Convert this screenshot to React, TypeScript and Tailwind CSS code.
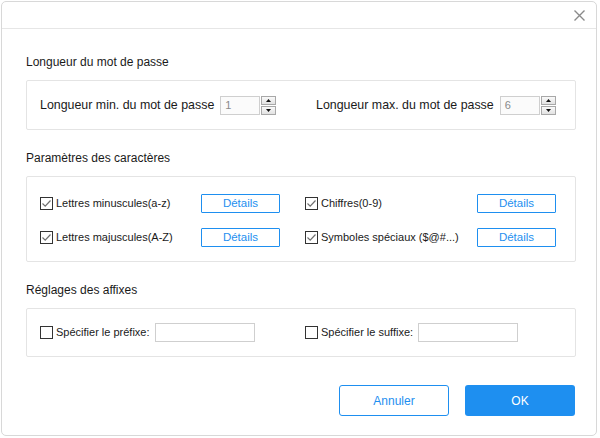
import React from "react";

const font = { fontFamily: '"Liberation Sans", Arial, sans-serif' };

const Checkbox = ({ checked }: { checked: boolean }) => (
  <span className="w-[13px] h-[13px] border border-[#333] bg-white flex items-center justify-center shrink-0">
    {checked && (
      <svg width="11" height="11" viewBox="0 0 11 11">
        <path d="M1.5 5.5 L4.2 8.2 L9.5 2.5" fill="none" stroke="#707070" strokeWidth="1.2" />
      </svg>
    )}
  </span>
);

const Spinner = ({ value }: { value: string }) => (
  <div className="flex items-center">
    <div className="w-[40px] h-[19px] border border-[#cfcfcf] bg-[#fbfbfb] text-[#8a8a8a] text-[11px] leading-[17px] pl-[4px]">
      {value}
    </div>
    <div className="flex flex-col gap-[1px] ml-px">
      <div className="w-[15px] h-[9px] border border-[#a8a8a8] bg-gradient-to-b from-[#fafafa] to-[#e2e2e2] flex items-center justify-center">
        <svg width="5" height="3" viewBox="0 0 5 3"><path d="M2.5 0 L5 3 L0 3 Z" fill="#111" /></svg>
      </div>
      <div className="w-[15px] h-[9px] border border-[#a8a8a8] bg-gradient-to-b from-[#fafafa] to-[#e2e2e2] flex items-center justify-center">
        <svg width="5" height="3" viewBox="0 0 5 3"><path d="M0 0 L5 0 L2.5 3 Z" fill="#111" /></svg>
      </div>
    </div>
  </div>
);

const DetailsButton = () => (
  <button className="w-[79px] h-[19px] border border-[#1e8ff0] text-[#1e8ff0] text-[11.5px] leading-[17px] bg-white rounded-[1px]">
    Détails
  </button>
);

const CheckLabel = ({ checked, label }: { checked: boolean; label: string }) => (
  <label className="flex items-center gap-[3px] text-[11px] text-[#1a1a1a] whitespace-nowrap">
    <Checkbox checked={checked} />
    <span>{label}</span>
  </label>
);

const Section = ({ title, children }: { title: string; children: React.ReactNode }) => (
  <div>
    <div className="h-[16px] leading-[16px] text-[12px] text-[#1a1a1a]">{title}</div>
    <div className="mt-[10px] border border-[#e4e4e4] rounded-[2px]">{children}</div>
  </div>
);

export default function App() {
  return (
    <div className="w-[600px] h-[438px] bg-white p-px" style={font}>
      <div className="w-[596px] h-[435px] border border-[#d8d8d8] rounded-[5px] flex flex-col">
        <div className="h-[27px] border-b border-[#e6e6e6] flex items-center justify-end pr-[11px]">
          <svg width="11" height="11" viewBox="0 0 11 11">
            <path d="M0.5 0.5 L10.5 10.5 M10.5 0.5 L0.5 10.5" stroke="#8a8a8a" strokeWidth="1.4" />
          </svg>
        </div>

        <div className="flex flex-col gap-[20px] pl-[24px] pr-[20px] pt-[25px]">
          <Section title="Longueur du mot de passe">
            <div className="h-[48px] flex items-center pl-[13px] text-[12.4px] text-[#1a1a1a] whitespace-nowrap">
              <div className="w-[276px] flex items-center gap-[6px]">
                <span>Longueur min. du mot de passe</span>
                <Spinner value="1" />
              </div>
              <div className="flex items-center gap-[6px]">
                <span>Longueur max. du mot de passe</span>
                <Spinner value="6" />
              </div>
            </div>
          </Section>

          <Section title="Paramètres des caractères">
            <div className="pl-[13px] pt-[16px] pb-[14px] flex flex-col gap-[14px]">
              <div className="flex items-center h-[20px]">
                <div className="w-[161px]"><CheckLabel checked label="Lettres minuscules(a-z)" /></div>
                <DetailsButton />
                <div className="w-[25px]" />
                <div className="w-[172px]"><CheckLabel checked label="Chiffres(0-9)" /></div>
                <DetailsButton />
              </div>
              <div className="flex items-center h-[20px]">
                <div className="w-[161px]"><CheckLabel checked label="Lettres majuscules(A-Z)" /></div>
                <DetailsButton />
                <div className="w-[25px]" />
                <div className="w-[172px]"><CheckLabel checked label="Symboles spéciaux ($@#...)" /></div>
                <DetailsButton />
              </div>
            </div>
          </Section>

          <Section title="Réglages des affixes">
            <div className="h-[47px] flex items-center pl-[13px]">
              <div className="w-[265px] flex items-center gap-[5px]">
                <CheckLabel checked={false} label="Spécifier le préfixe:" />
                <div className="w-[100px] h-[19px] border border-[#cfcfcf] bg-white" />
              </div>
              <div className="flex items-center gap-[5px]">
                <CheckLabel checked={false} label="Spécifier le suffixe:" />
                <div className="w-[100px] h-[19px] border border-[#cfcfcf] bg-white" />
              </div>
            </div>
          </Section>
        </div>

        <div className="flex justify-end gap-[16px] pr-[21px] mt-[28px]">
          <button className="w-[110px] h-[31px] border-[1.5px] border-[#1e8ff0] rounded-[3px] text-[#1e8ff0] text-[12px] bg-white">
            Annuler
          </button>
          <button className="w-[110px] h-[31px] rounded-[3px] bg-[#1e8ff0] text-white text-[12px]">
            OK
          </button>
        </div>
      </div>
    </div>
  );
}
